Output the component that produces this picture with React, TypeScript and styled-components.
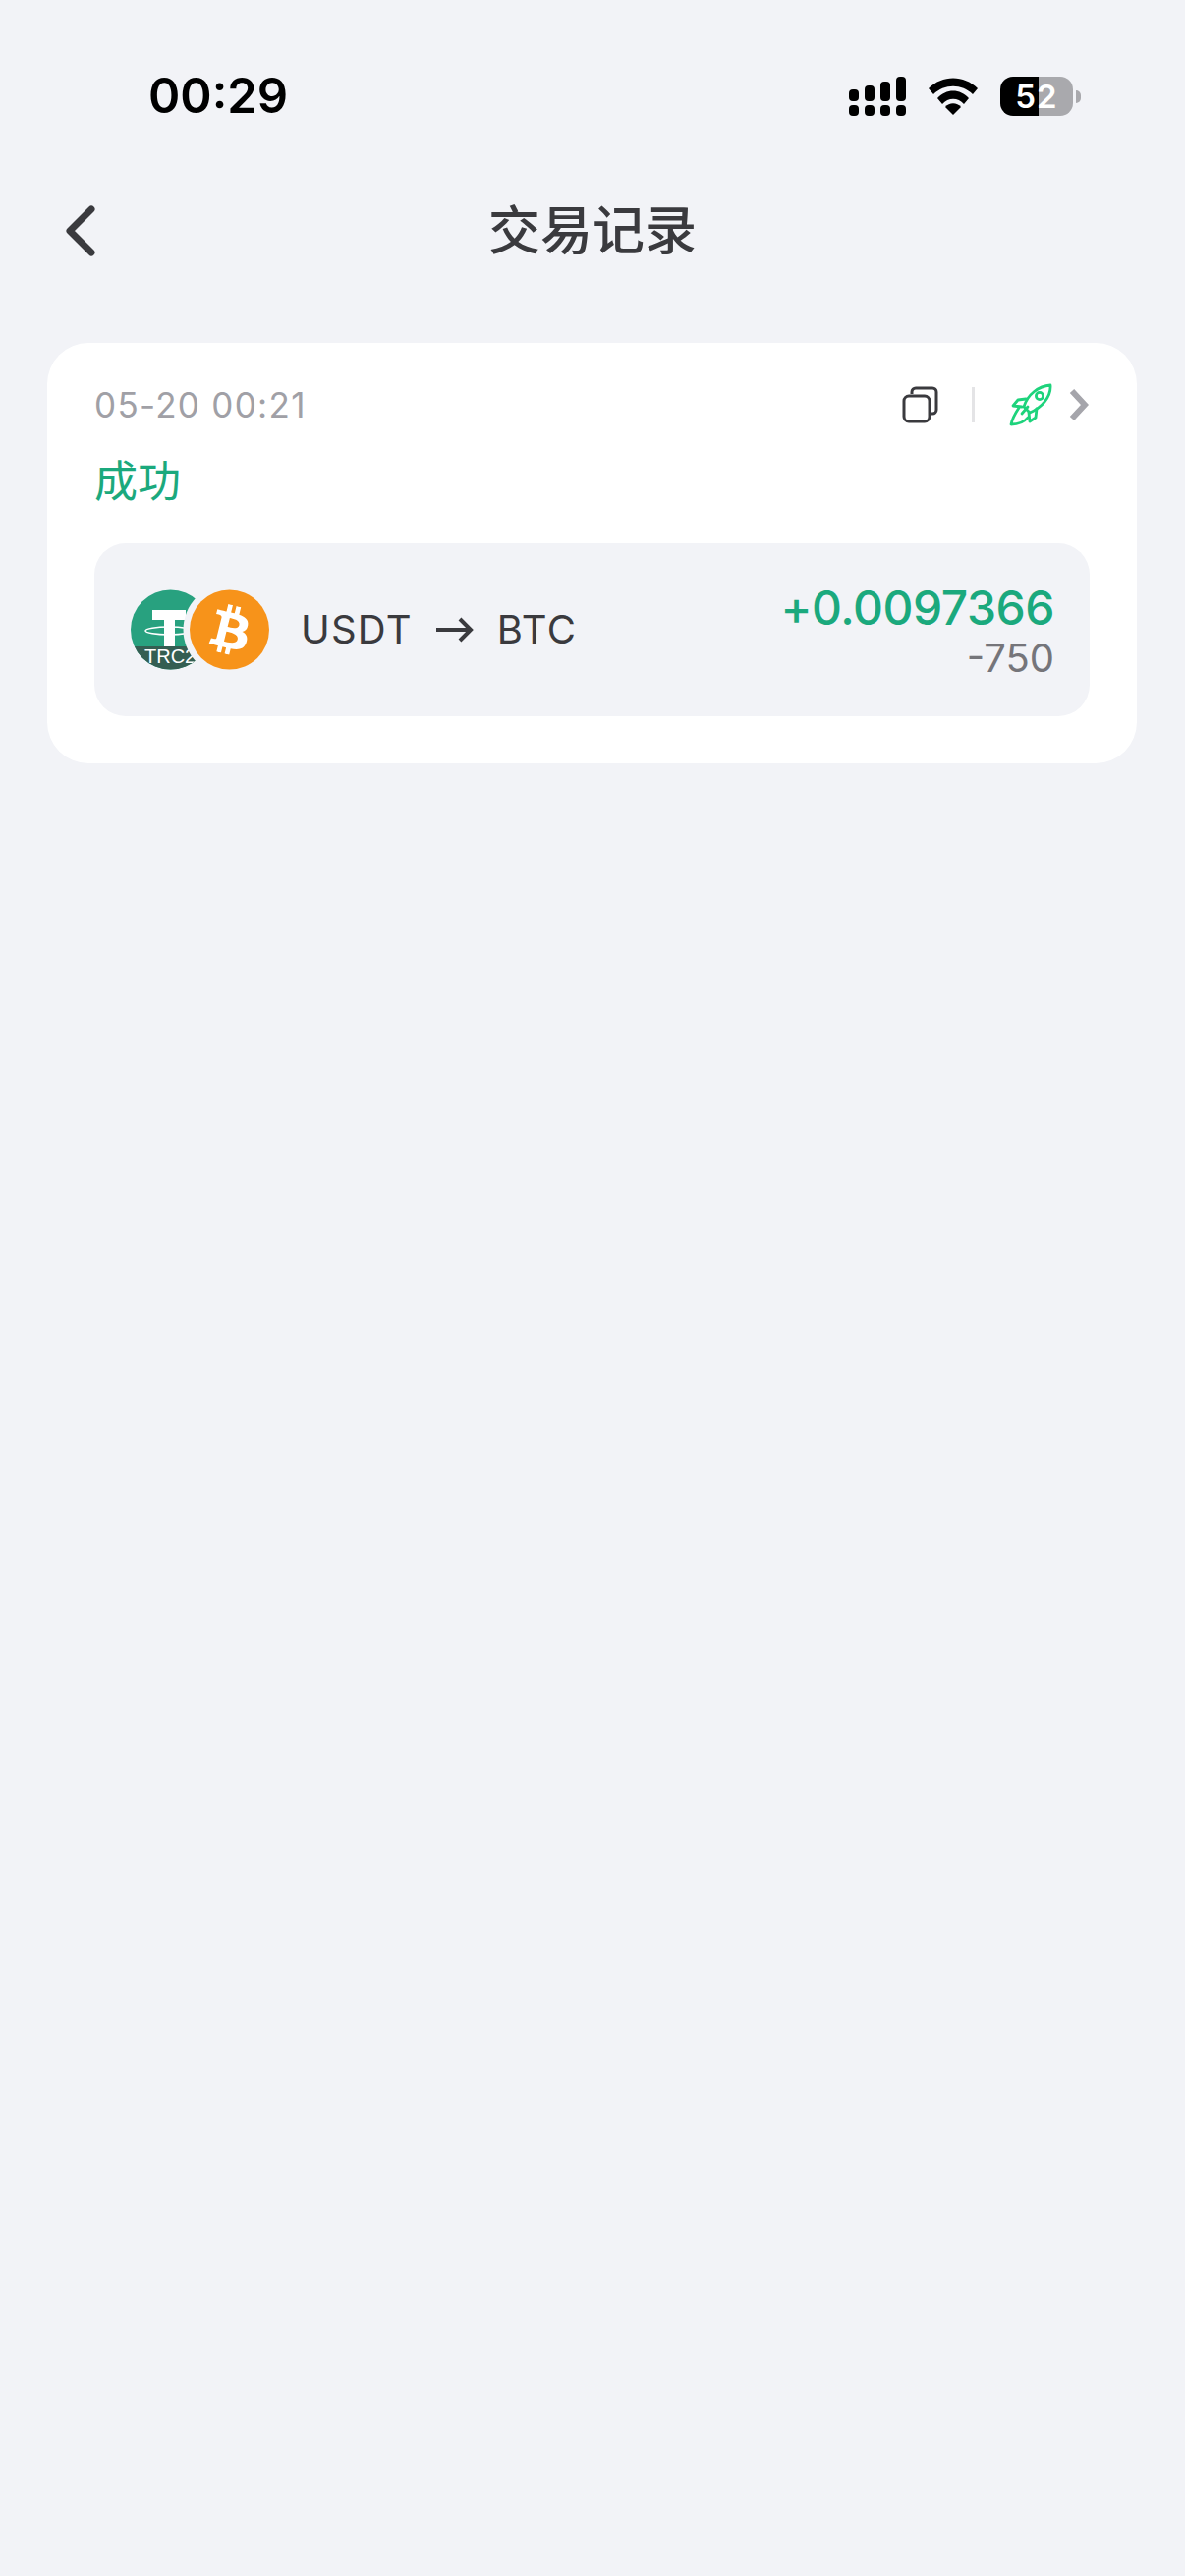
import styled, { createGlobalStyle } from "styled-components";
import { FaBtc } from "react-icons/fa";

const GlobalStyle = createGlobalStyle`
  html, body {
    margin: 0;
    padding: 0;
    background: #f2f3f7;
  }
  * {
    box-sizing: border-box;
  }
`;

const Page = styled.div`
  width: 1206px;
  height: 2622px;
  overflow: hidden;
  background: #f2f3f7;
  font-family: Inter, "Noto Sans CJK SC", sans-serif;
  color: #3a3a3e;
`;

const StatusBar = styled.div`
  height: 132px;
  padding: 65px 106px 0 151px;
  display: flex;
  justify-content: space-between;
  align-items: flex-start;
`;

const Time = styled.div`
  font-size: 49px;
  line-height: 66px;
  font-weight: 600;
  color: #000;
`;

const StatusIcons = styled.div`
  display: flex;
  align-items: center;
  gap: 23px;
  height: 66px;
`;

const Battery = styled.div`
  width: 74px;
  height: 40px;
  border-radius: 13px;
  overflow: hidden;
  background: linear-gradient(to right, #000 0 39px, #a9a9ad 39px);
  color: #fff;
  font-size: 33px;
  font-weight: 600;
  line-height: 40px;
  letter-spacing: 1px;
  text-align: center;
`;

const BatteryWrap = styled.div`
  display: flex;
  align-items: center;
  gap: 3px;
`;

const BatteryCap = styled.div`
  width: 5px;
  height: 13px;
  border-radius: 0 6px 6px 0;
  background: #a9a9ad;
`;

const NavBar = styled.div`
  position: relative;
  height: 100px;
  margin-top: 53px;
  display: flex;
  align-items: center;
  justify-content: center;
`;

const BackIcon = styled.svg`
  position: absolute;
  left: 64px;
  top: 24px;
  width: 36px;
  height: 52px;
`;

const Title = styled.h1`
  margin: 0;
  font-size: 53px;
  font-weight: 500;
  line-height: 100px;
  color: #3a3a3e;
`;

const Card = styled.section`
  margin: 64px 49px 0 48px;
  height: 428px;
  padding: 41px 48px 48px;
  border-radius: 42px;
  background: #fff;
`;

const CardTop = styled.div`
  display: flex;
  align-items: center;
  justify-content: space-between;
  height: 44px;
`;

const DateText = styled.span`
  font-size: 35px;
  line-height: 44px;
  letter-spacing: 1.3px;
  color: #a0a0a6;
`;

const Actions = styled.div`
  display: flex;
  align-items: center;
  margin-right: 1px;
`;

const Divider = styled.div`
  width: 3px;
  height: 36px;
  margin: 0 35px 0 34px;
  background: #e4e4e6;
`;

const Chevron = styled.svg`
  margin-left: 17px;
`;

const Status = styled.div`
  margin-top: 26px;
  font-size: 44px;
  line-height: 60px;
  font-weight: 400;
  color: #1ba97d;
`;

const Inner = styled.div`
  margin-top: 33px;
  height: 176px;
  padding: 0 36px;
  border-radius: 32px;
  background: #f2f3f7;
  display: flex;
  align-items: center;
  justify-content: space-between;
`;

const Pair = styled.div`
  display: flex;
  align-items: center;
`;

const Coins = styled.svg`
  width: 142px;
  height: 84px;
  margin-right: 32px;
`;

const PairText = styled.span`
  font-size: 40px;
  line-height: 50px;
  font-weight: 400;
  letter-spacing: 1.2px;
  color: #3a3a3e;
`;

const Arrow = styled.svg`
  margin: 0 24px;
`;

const Amounts = styled.div`
  display: flex;
  flex-direction: column;
  align-items: flex-end;
  padding-top: 2px;
`;

const Gain = styled.div`
  font-size: 48px;
  line-height: 56px;
  font-weight: 450;
  letter-spacing: -0.5px;
  color: #1ba97d;
`;

const Spend = styled.div`
  font-size: 40px;
  line-height: 46px;
  font-weight: 400;
  color: #75757a;
`;

const CoinLabel = styled.text`
  font-family: "Liberation Sans", sans-serif;
  font-size: 20px;
  fill: #fff;
`;

const App = () => {
  return (
    <Page>
      <GlobalStyle />
      <StatusBar>
        <Time>00:29</Time>
        <StatusIcons>
          <svg width="58" height="42" viewBox="0 0 58 42">
            <g fill="#000">
              <rect x="0" y="14" width="10" height="12" rx="4" />
              <rect x="16" y="10" width="10" height="16" rx="4" />
              <rect x="32" y="6" width="10" height="20" rx="4" />
              <rect x="48" y="1" width="10" height="25" rx="4" />
              <rect x="0" y="30" width="10" height="11" rx="4" />
              <rect x="16" y="30" width="10" height="11" rx="4" />
              <rect x="32" y="30" width="10" height="11" rx="4" />
              <rect x="48" y="30" width="10" height="11" rx="4" />
            </g>
          </svg>
          <svg width="50" height="38" viewBox="0 0 50 38">
            <path d="M0 11C14-3 36-3 50 11L45 17C34 6 16 6 5 17Z" fill="#000" />
            <path d="M9 21C18 11 32 11 41 21L36 27C30 20 20 20 14 27Z" fill="#000" />
            <path d="M17 30C21 25 29 25 33 30L25 38Z" fill="#000" />
          </svg>
          <BatteryWrap>
            <Battery>52</Battery>
            <BatteryCap />
          </BatteryWrap>
        </StatusIcons>
      </StatusBar>
      <NavBar>
        <BackIcon viewBox="0 0 36 52" fill="none">
          <path d="M29 4L7 26L29 48" stroke="#3a3a3e" strokeWidth="7" strokeLinecap="round" strokeLinejoin="round" />
        </BackIcon>
        <Title>交易记录</Title>
      </NavBar>
      <Card>
        <CardTop>
          <DateText>05-20 00:21</DateText>
          <Actions>
            <svg width="37" height="38" viewBox="0 0 37 38" fill="none" stroke="#3a3a3e" strokeWidth="3">
              <path d="M10 8V6a4 4 0 0 1 4-4h17a4 4 0 0 1 4 4v18a4 4 0 0 1-4 4h-3" />
              <rect x="2" y="10" width="26" height="26" rx="5" />
            </svg>
            <Divider />
            <svg width="44" height="44" viewBox="0 0 44 44" fill="none" stroke="#1ed37c" strokeWidth="2.8" strokeLinejoin="round" strokeLinecap="round">
              <path d="M15 24C19 11 30 3 42 2C43 14 33 25 21 30Z" />
              <circle cx="31" cy="13" r="3.6" />
              <path d="M17 16L9 17L4 23L13 24" />
              <path d="M28 26L27 35L21 39L20 30" />
              <path d="M10 25C6 31 3 37 2 42C9 42 15 40 19 35" />
              <path d="M13 31L19 24" />
            </svg>
            <Chevron width="20" height="34" viewBox="0 0 20 34" fill="none">
              <path d="M3 3L16 17L3 31" stroke="#a5a5ab" strokeWidth="6" />
            </Chevron>
          </Actions>
        </CardTop>
        <Status>成功</Status>
        <Inner>
          <Pair>
            <Coins viewBox="0 0 142 84">
              <defs>
                <clipPath id="usdt-clip">
                  <circle cx="41.5" cy="42" r="40.5" />
                </clipPath>
              </defs>
              <g clipPath="url(#usdt-clip)">
                <rect x="0" y="0" width="84" height="84" fill="#28a17f" />
                <rect x="0" y="59" width="84" height="25" fill="#345e52" />
                <path d="M23 22H57V32H46V59H35V32H23Z" fill="#fff" />
                <ellipse cx="40" cy="43" rx="24" ry="4" fill="none" stroke="#fff" strokeWidth="1.5" />
                <CoinLabel x="15" y="76">TRC20</CoinLabel>
              </g>
              <circle cx="101.5" cy="42" r="47" fill="#f2f3f7" />
              <circle cx="101.5" cy="42" r="40.5" fill="#f7931a" />
              <g transform="rotate(14 101.5 42)">
                <FaBtc x="78" y="17" size={50} color="#fff" />
              </g>
            </Coins>
            <PairText>USDT</PairText>
            <Arrow width="38" height="26" viewBox="0 0 38 26" fill="none" stroke="#3a3a3e" strokeWidth="4">
              <path d="M0 13H35" />
              <path d="M24 2L35 13L24 24" />
            </Arrow>
            <PairText>BTC</PairText>
          </Pair>
          <Amounts>
            <Gain>+0.0097366</Gain>
            <Spend>-750</Spend>
          </Amounts>
        </Inner>
      </Card>
    </Page>
  );
};

export default App;
